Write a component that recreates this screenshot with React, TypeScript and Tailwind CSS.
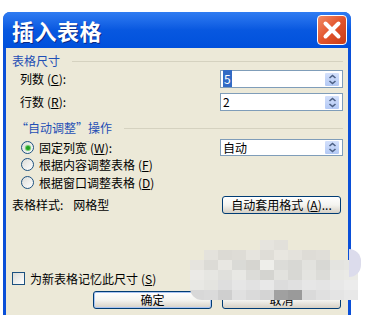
import type { ReactNode } from "react"

const font = { fontFamily: '"Noto Sans CJK SC", "Liberation Sans", sans-serif' }

function Key({ k }: { k: string }) {
  return (
    <span className="ml-[3px]">
      (<span className="underline underline-offset-1">{k}</span>)
    </span>
  )
}

function Spinner() {
  return (
    <div className="mr-[2px] flex h-[15px] w-[16px] flex-col items-center justify-center rounded-[2px] border border-white bg-gradient-to-b from-[#d3e0fb] to-[#b3c9f5]">
      <svg width="9" height="11" viewBox="0 0 9 11">
        <path d="M1.5 4 L4.5 1.5 L7.5 4" fill="none" stroke="#4d6185" strokeWidth="1.6" />
        <path d="M1.5 7 L4.5 9.5 L7.5 7" fill="none" stroke="#4d6185" strokeWidth="1.6" />
      </svg>
    </div>
  )
}

function Field({ children, h = "h-[18px]" }: { children: ReactNode; h?: string }) {
  return (
    <div className={`flex ${h} w-[123px] items-center justify-between border border-[#7f9db9] bg-white pl-[2px]`}>
      <span className="text-[12px] leading-none text-black">{children}</span>
      <Spinner />
    </div>
  )
}

function Radio({ on }: { on?: boolean }) {
  return (
    <div className="mr-[5px] flex h-[13px] w-[13px] items-center justify-center rounded-full border border-[#1c5180] bg-gradient-to-br from-[#dcdcd7] to-white">
      {on && <div className="h-[4px] w-[4px] rounded-full bg-[#21a121] shadow-[0_0_1px_1px_#63c663]" />}
    </div>
  )
}

function XpButton({ children, focus }: { children: ReactNode; focus?: boolean }) {
  return (
    <div
      className={`flex h-[18px] w-[119px] items-center justify-center rounded-[3px] border border-[#003c74] bg-gradient-to-b from-white via-[#f4f4f0] to-[#d6d0c5] text-[12px] leading-none text-black ${
        focus ? "shadow-[inset_0_0_0_1px_#a9c4f2]" : ""
      }`}
    >
      {children}
    </div>
  )
}

const mosaic = [
  ["", "", "", "", "", "#e6e4de", "#e2e0da", "", "", "", "", ""],
  ["", "#e4e2dc", "#dcdad4", "#dedcd6", "#e6e4de", "#dfddd7", "#e8e6e0", "#e4e2dc", "#dedcd6", "#e0ded8", "", ""],
  ["#e6e4de", "#dcdbd6", "#e8e7e2", "#dadad6", "#d6d5d0", "#eeeeea", "#dcdcd8", "#d8d8d4", "#e2e2de", "#d8d8d4", "#e4e4e0", "#e6e6e2"],
  ["#ebeae6", "#e6e6e2", "#e0e0dc", "#e8e8e4", "#dcdcd8", "#d4d4d0", "#e2e2de", "#d8d8d4", "#e4e4e0", "#dcdcd8", "#e8e8e4", "#eaeae6"],
  ["#e8e8e4", "#e4e4e0", "#dedede", "#e6e6e6", "#e2e2e2", "#e8e8e8", "#dcdcdc", "#e0e0e0", "#e6e6e6", "#e4e4e4", "#e8e8e8", "#ececec"],
  ["#d8d8d8", "#dadada", "#cfcfcf", "#e0e0e0", "#dadada", "#d4d4d4", "#a0a0a0", "#9a9a9a", "#dadada", "#e0e0e0", "#e4e4e4", "#e8e8e8"],
]

export default function App() {
  return (
    <div className="relative h-[315px] w-[385px] overflow-hidden bg-white" style={font}>
      <div className="ml-[3px] mt-[12px] w-[348px] rounded-t-[7px] bg-[#0a4fd8]">
        {/* Title bar */}
        <div className="flex h-[36px] items-center justify-between rounded-t-[7px] bg-gradient-to-b from-[#2f7cf2] via-[#0858e0] to-[#0050dc] pl-[9px] pr-[4px]">
          <span className="text-[22px] font-bold leading-none tracking-[0.5px] text-white [text-shadow:1px_1px_0_#0b2a86]">
            插入表格
          </span>
          <div className="flex h-[30px] w-[30px] items-center justify-center rounded-[4px] border border-white bg-gradient-to-br from-[#f08a64] via-[#e2542c] to-[#c83c16]">
            <svg width="20" height="20" viewBox="0 0 20 20">
              <path d="M3.5 3.5 L16.5 16.5 M16.5 3.5 L3.5 16.5" stroke="white" strokeWidth="4" strokeLinecap="round" />
            </svg>
          </div>
        </div>

        {/* Body */}
        <div className="mx-[3px] h-[267px] bg-[#ece9d8] pl-[6px] pr-[5px] pt-[5px] text-[12px] leading-none text-black">
          <div className="flex h-[16px] items-center">
            <span className="text-[#1f4fb5]">表格尺寸</span>
            <div className="ml-[12px] h-px flex-1 bg-[#d5d2c0]" />
          </div>

          <div className="mt-[1px] flex h-[18px] items-center justify-between pl-[8px]">
            <span>
              列数<Key k="C" />:
            </span>
            <Field>
              <span className="bg-[#316ac5] px-px text-white">5</span>
            </Field>
          </div>

          <div className="mt-[5px] flex h-[18px] items-center justify-between pl-[8px]">
            <span>
              行数<Key k="R" />:
            </span>
            <Field>2</Field>
          </div>

          <div className="mt-[9px] flex h-[16px] items-center pl-[4px]">
            <span className="text-[#1f4fb5]">“自动调整”操作</span>
            <div className="ml-[12px] h-px flex-1 bg-[#d5d2c0]" />
          </div>

          <div className="mt-[3px] flex h-[17px] items-center justify-between pl-[9px]">
            <span className="flex items-center">
              <Radio on />
              固定列宽<Key k="W" />:
            </span>
            <Field h="h-[17px]">自动</Field>
          </div>

          <div className="flex h-[17px] items-center pl-[9px]">
            <Radio />
            根据内容调整表格<Key k="F" />
          </div>

          <div className="mt-[1px] flex h-[17px] items-center pl-[9px]">
            <Radio />
            根据窗口调整表格<Key k="D" />
          </div>

          <div className="mt-[5px] flex h-[18px] items-center justify-between pr-[2px]">
            <span>
              表格样式:<span className="ml-[10px]">网格型</span>
            </span>
            <XpButton>
              自动套用格式<Key k="A" />...
            </XpButton>
          </div>

          <div className="mt-[56px] flex h-[17px] items-center">
            <div className="mr-[5px] h-[13px] w-[13px] border border-[#1c5180] bg-gradient-to-br from-[#dcdcd7] to-white" />
            为新表格记忆此尺寸<Key k="S" />
          </div>

          <div className="mt-[4px] flex items-center justify-end gap-[10px] pr-[2px]">
            <XpButton focus>确定</XpButton>
            <XpButton>取消</XpButton>
          </div>
        </div>
      </div>

      {/* Mosaic watermark */}
      <div className="absolute left-[190px] top-[240px] grid grid-cols-[repeat(12,14px)] grid-rows-[repeat(6,10px)] overflow-hidden rounded-bl-[12px]">
        {mosaic.flat().map((c, i) => (
          <div key={i} style={c ? { background: c } : undefined} />
        ))}
      </div>
      <div className="absolute left-[349px] top-[249px] h-[28px] w-[12px] rounded-r-full bg-[#dcdcec]" />
    </div>
  )
}
